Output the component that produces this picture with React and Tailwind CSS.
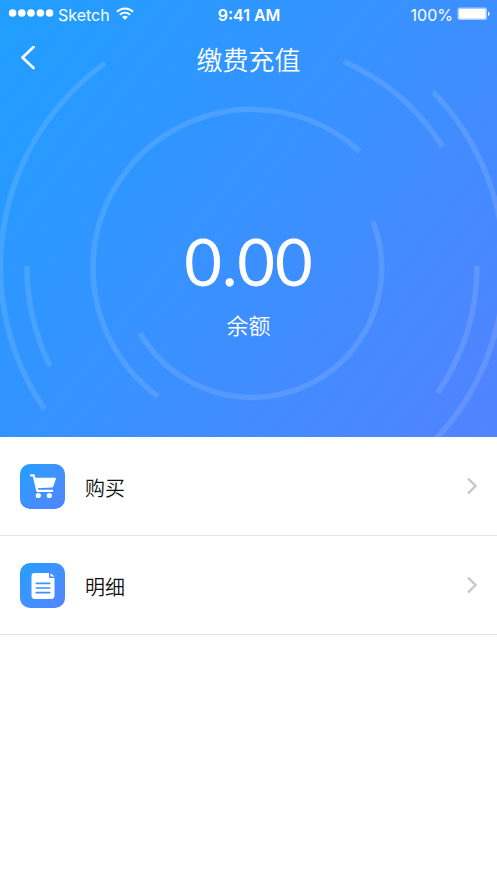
import React from 'react';

const ARCS = [
  'M359.5 151.3A159 159 0 0 0 93 268A159 159 0 0 0 158 396.3',
  'M373 221.5A129.5 129.5 0 0 1 252 397.5A129.5 129.5 0 0 1 140 333',
  'M27 266A225 225 0 0 0 50 366',
  'M477 266A225 225 0 0 1 437.5 393',
  'M344 61.5A226 226 0 0 1 442.5 146.5',
  'M105 63.2A251 251 0 0 0 44.5 409',
  'M433 92A251 251 0 0 1 433 442',
];

const CartIcon = () => (
  <svg viewBox="0 0 45 45" className="h-[45px] w-[45px]" fill="white" aria-hidden="true">
    <path
      d="M11 11.4h2.8L17.3 26.8h15"
      fill="none"
      stroke="white"
      strokeWidth="2.2"
      strokeLinecap="round"
      strokeLinejoin="round"
    />
    <path d="M15 13.7H34.8c1 0 1.3.6 1 1.5l-2.5 7c-.3.9-.8 1.2-1.7 1.3L17 24.3z" />
    <circle cx="18.3" cy="31.5" r="2.6" />
    <circle cx="29.3" cy="31.5" r="2.6" />
  </svg>
);

const DocIcon = () => (
  <svg viewBox="0 0 45 45" className="h-[45px] w-[45px]" aria-hidden="true">
    <path
      d="M14.5 10H29v3.5c0 1 .6 1.5 1.5 1.5h4v17.5c0 2-1 3.5-3 3.5h-17c-2 0-3-1.5-3-3.5V13c0-2 1-3 3-3z"
      fill="white"
    />
    <path d="M30.5 10.2v2.6c0 .5.3.8.8.8h3.2z" fill="white" />
    <path
      d="M16.3 20.3h13.4M16.3 25h13.4M16.3 29.7h13.4"
      stroke="#3a93ff"
      strokeWidth="1.7"
      strokeLinecap="round"
    />
  </svg>
);

const StatusBar = () => (
  <div className="grid h-[30px] grid-cols-3 items-center pr-[7px] pl-2 font-['Inter',sans-serif] text-base">
    <div className="flex items-center gap-1">
      <svg viewBox="0 0 46 10" className="mb-0.5 h-[10px] w-[46px]" fill="white" aria-hidden="true">
        <circle cx="4.6" cy="4" r="3.8" />
        <circle cx="13.8" cy="4" r="3.8" />
        <circle cx="23" cy="4" r="3.8" />
        <circle cx="32.4" cy="4" r="3.8" />
        <circle cx="41.6" cy="4" r="3.8" />
      </svg>
      <span>Sketch</span>
      <svg viewBox="0 0 18 14" className="mb-0.5 ml-0.5 h-[14px] w-[18px]" fill="none" stroke="white" aria-hidden="true">
        <path d="M1 4.7C5.5.3 12.5.3 17 4.7" strokeWidth="2" />
        <path d="M3.9 7.7c3-2.7 7.2-2.7 10.2 0" strokeWidth="1.9" />
        <path d="M9 12.8L6.1 9.9c1.6-1.6 4.2-1.6 5.8 0z" fill="white" stroke="none" />
      </svg>
    </div>
    <span className="text-center font-semibold">9:41 AM</span>
    <div className="flex items-center justify-end gap-1">
      <span>100%</span>
      <svg viewBox="0 0 33 14" className="mb-0.5 h-[14px] w-[33px]" fill="white" aria-hidden="true">
        <rect x=".5" y=".5" width="29.5" height="12.5" rx="2" fillOpacity=".55" />
        <rect x="2" y="2" width="26.5" height="9.5" rx="1" />
        <path d="M31 4.5c2.2.8 2.2 3.800 0 4.600z" />
      </svg>
    </div>
  </div>
);

const MenuRow = ({ icon, label }) => (
  <li className="border-b border-[#e4e4e4]">
    <button type="button" className="flex h-[98px] w-full items-center px-5 text-left">
      <span className="rounded-[10px] bg-linear-to-br from-[#1f9fff] to-[#5084ff]">{icon}</span>
      <span className="ml-5 flex-1 pt-1 text-xl font-[350] text-[#111]">{label}</span>
      <svg viewBox="0 0 10 18" className="h-[18px] w-[10px]" fill="none" stroke="#c7c7cc" strokeWidth="2.4" aria-hidden="true">
        <path d="M1 1.5L8.5 9 1 16.5" />
      </svg>
    </button>
  </li>
);

const App = () => {
  return (
    <main className="min-h-screen bg-white font-['Noto_Sans_CJK_SC_DemiLight','Noto_Sans_CJK_SC',sans-serif]">
      <section className="relative h-[437px] overflow-hidden bg-[linear-gradient(128deg,#1f9fff,#5283ff)] text-white">
        <svg
          viewBox="0 0 497 437"
          preserveAspectRatio="xMidYMid slice"
          className="absolute inset-0 h-full w-full"
          fill="none"
          stroke="white"
          strokeOpacity=".12"
          strokeWidth="5.5"
          aria-hidden="true"
        >
          {ARCS.map((d) => (
            <path key={d} d={d} />
          ))}
        </svg>

        <div className="relative">
          <StatusBar />

          <header className="grid h-[58px] grid-cols-[40px_1fr_40px] items-center px-2">
            <button type="button" aria-label="返回" className="flex h-10 items-center justify-center pb-0.5">
              <svg viewBox="0 0 14 24" className="h-6 w-[14px]" fill="none" stroke="white" strokeWidth="2.6" strokeLinecap="round" strokeLinejoin="round" aria-hidden="true">
                <path d="M12.5 1L1.5 11.5l11 10.5" />
              </svg>
            </button>
            <h1 className="text-center text-[26px] leading-10 font-[350]">缴费充值</h1>
          </header>

          <div className="pt-32 text-center">
            <p className="font-['Lato',sans-serif] text-[65px] leading-[90px]">0.00</p>
            <p className="text-[22px] leading-9 font-[350]">余额</p>
          </div>
        </div>
      </section>

      <ul>
        <MenuRow icon={<CartIcon />} label="购买" />
        <MenuRow icon={<DocIcon />} label="明细" />
      </ul>
    </main>
  );
};

export default App;
